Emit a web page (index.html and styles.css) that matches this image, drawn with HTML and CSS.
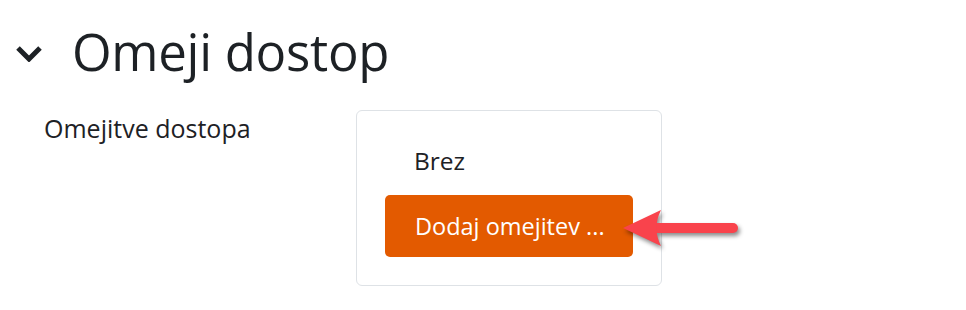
FILE: index.html
```html
<!DOCTYPE html>
<html lang="sl">
<head>
<meta charset="utf-8">
<title>Omeji dostop</title>
<link rel="stylesheet" href="styles.css">
</head>
<body>
<div class="page">
  <div class="section-head">
    <svg class="chev" width="26" height="17" viewBox="0 0 26 17" aria-hidden="true">
      <path d="M2 3 L13 14 L24 3" fill="none" stroke="#1d2125" stroke-width="5" stroke-linejoin="miter"/>
    </svg>
    <h2 class="title">Omeji dostop</h2>
  </div>
  <div class="form-row">
    <div class="label">Omejitve dostopa</div>
    <div class="box">
      <div class="none">Brez</div>
      <button class="add" type="button">Dodaj omejitev ...</button>
      <svg class="arrow" width="130" height="52" viewBox="0 0 130 52" aria-hidden="true">
        <g class="arrow-shape">
          <line x1="34" y1="24" x2="114" y2="24" stroke="#f9434c" stroke-width="10" stroke-linecap="round"/>
          <path d="M4 24 L42 6 Q33 24 42 42 Z" fill="#f9434c"/>
        </g>
      </svg>
    </div>
  </div>
</div>
</body>
</html>
```

FILE: styles.css
```css
* { box-sizing: border-box; }
html, body { margin: 0; padding: 0; background: #fff; }
body {
  font-family: "Open Sans", "Lato", "Liberation Sans", sans-serif;
  color: #1d2125;
}
.page {
  width: 966px;
  height: 310px;
  overflow: hidden;
}
.section-head {
  display: flex;
  align-items: center;
  padding: 14px 0 0 16px;
  height: 88px;
}
.chev { display: block; margin-top: 4px; }
.title {
  margin: 0 0 0 30px;
  font-weight: 400;
  font-size: 51px;
  line-height: 64px;
  letter-spacing: -0.3px;
}
.form-row {
  display: flex;
  align-items: flex-start;
  padding-left: 44px;
  margin-top: 22px;
}
.label {
  width: 312px;
  font-size: 25px;
  line-height: 30px;
  padding-top: 3px;
}
.box {
  position: relative;
  width: 306px;
  height: 176px;
  border: 1px solid #dee2e6;
  border-radius: 6px;
  padding: 35px 0 0 28px;
}
.none {
  font-size: 24.5px;
  line-height: 30px;
  padding-left: 29px;
}
.add {
  display: block;
  margin-top: 19px;
  width: 248px;
  height: 62px;
  border: 0;
  border-radius: 5px;
  background: #e35a00;
  color: #fff;
  font-family: inherit;
  font-size: 23.5px;
  text-align: left;
  padding: 0 0 0 30px;
}
.arrow {
  position: absolute;
  left: 262px;
  top: 93px;
  overflow: visible;
}
.arrow-shape { filter: drop-shadow(2px 3px 2px rgba(0,0,0,0.45)); }
```
